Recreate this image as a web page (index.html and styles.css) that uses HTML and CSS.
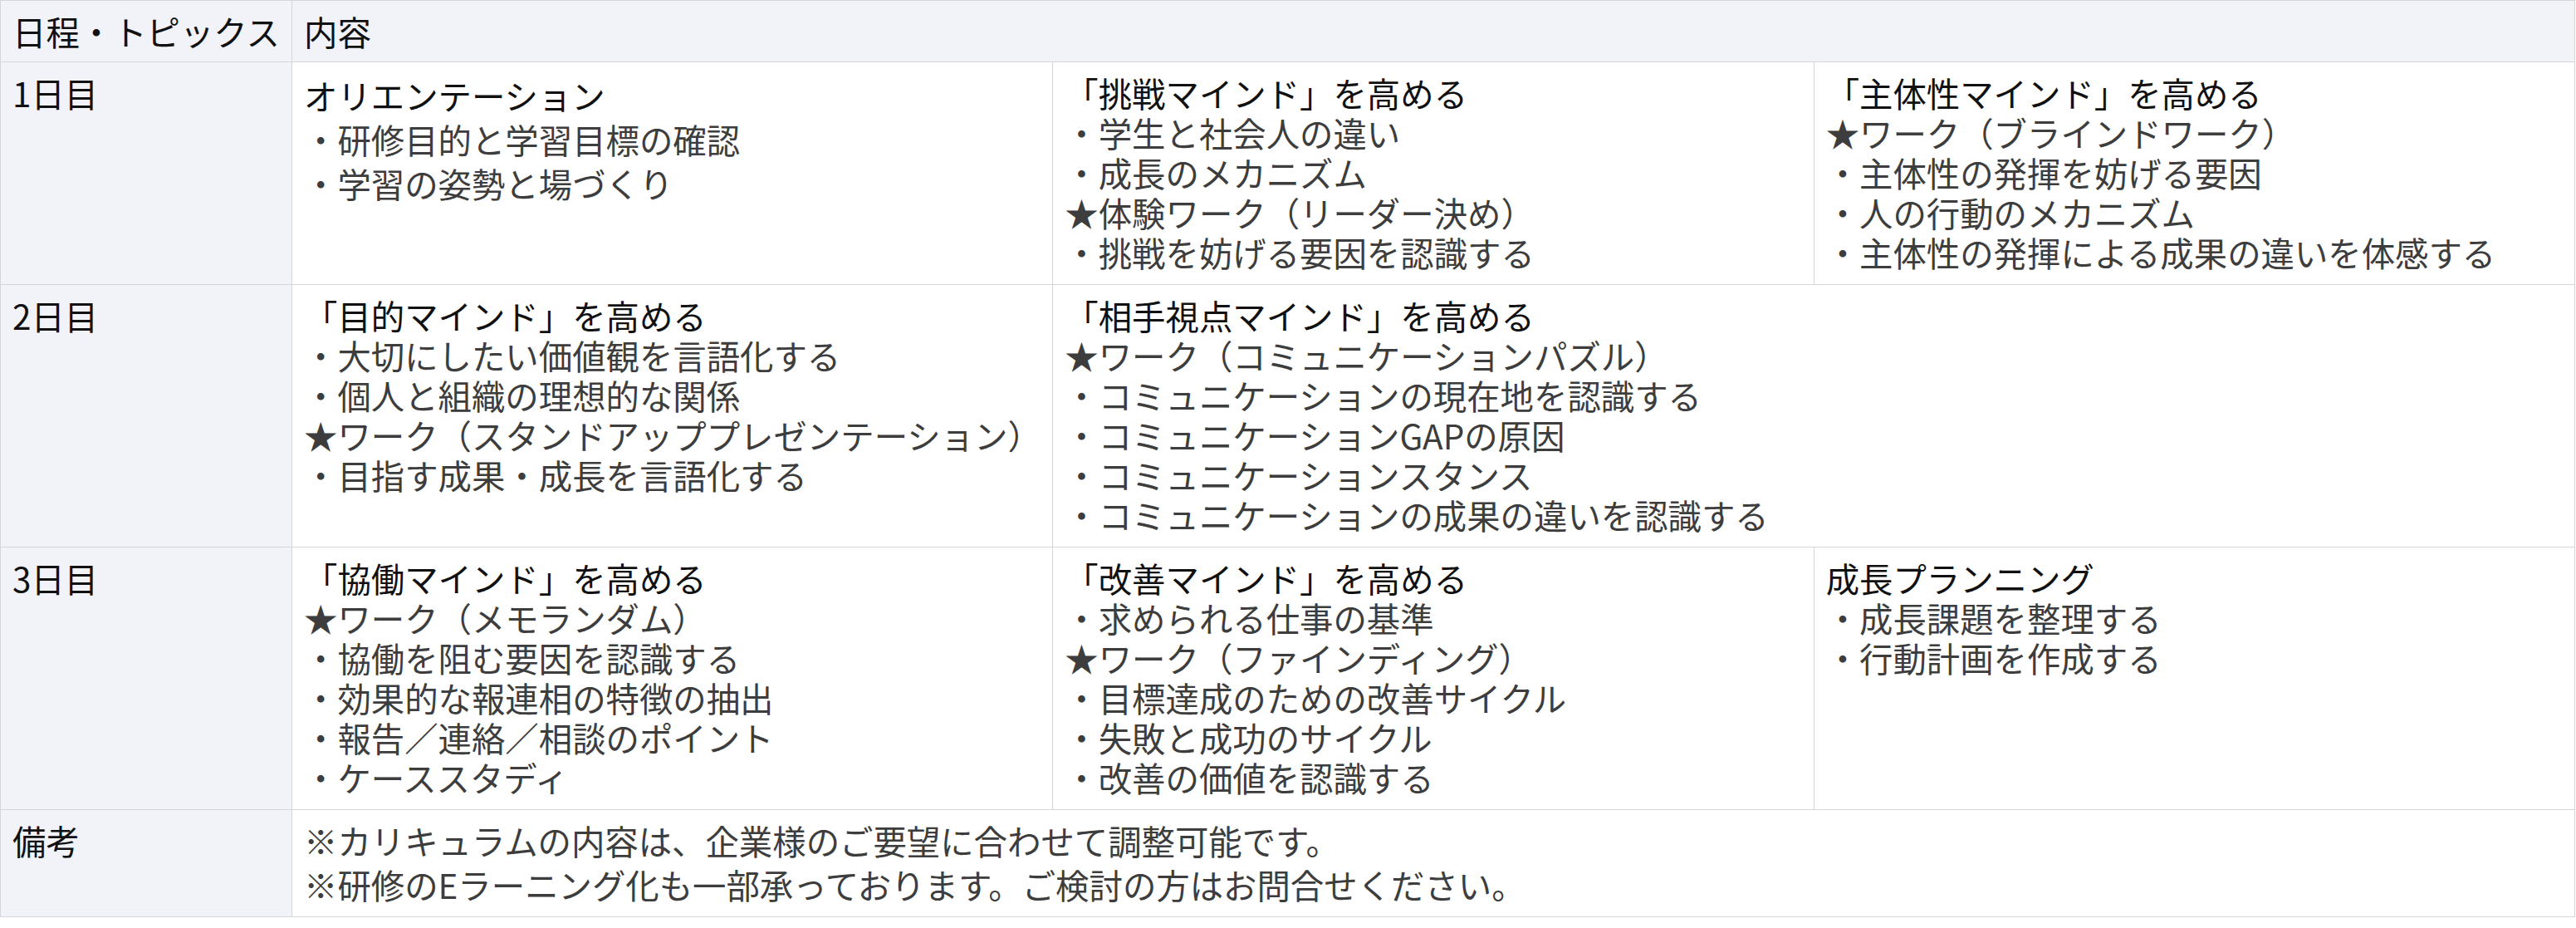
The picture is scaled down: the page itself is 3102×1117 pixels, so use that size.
FILE: index.html
```html
<!DOCTYPE html>
<html lang="ja">
<head>
<meta charset="utf-8">
<title>研修カリキュラム</title>
<link rel="stylesheet" href="styles.css">
</head>
<body>
<table class="curriculum">
  <colgroup>
    <col class="col-label">
    <col>
    <col>
    <col>
  </colgroup>
  <thead>
    <tr>
      <th class="head">日程・トピックス</th>
      <th class="head" colspan="3">内容</th>
    </tr>
  </thead>
  <tbody>
    <tr>
      <th class="label">1日目</th>
      <td class="cell loose">
        <div class="ttl">オリエンテーション</div>
        <div class="ln">・研修目的と学習目標の確認</div>
        <div class="ln">・学習の姿勢と場づくり</div>
      </td>
      <td class="cell">
        <div class="ttl">「挑戦マインド」を高める</div>
        <div class="ln">・学生と社会人の違い</div>
        <div class="ln">・成長のメカニズム</div>
        <div class="ln">★体験ワーク（リーダー決め）</div>
        <div class="ln">・挑戦を妨げる要因を認識する</div>
      </td>
      <td class="cell">
        <div class="ttl">「主体性マインド」を高める</div>
        <div class="ln">★ワーク（ブラインドワーク）</div>
        <div class="ln">・主体性の発揮を妨げる要因</div>
        <div class="ln">・人の行動のメカニズム</div>
        <div class="ln">・主体性の発揮による成果の違いを体感する</div>
      </td>
    </tr>
    <tr>
      <th class="label">2日目</th>
      <td class="cell">
        <div class="ttl">「目的マインド」を高める</div>
        <div class="ln">・大切にしたい価値観を言語化する</div>
        <div class="ln">・個人と組織の理想的な関係</div>
        <div class="ln">★ワーク（スタンドアッププレゼンテーション）</div>
        <div class="ln">・目指す成果・成長を言語化する</div>
      </td>
      <td class="cell" colspan="2">
        <div class="ttl">「相手視点マインド」を高める</div>
        <div class="ln">★ワーク（コミュニケーションパズル）</div>
        <div class="ln">・コミュニケーションの現在地を認識する</div>
        <div class="ln">・コミュニケーションGAPの原因</div>
        <div class="ln">・コミュニケーションスタンス</div>
        <div class="ln">・コミュニケーションの成果の違いを認識する</div>
      </td>
    </tr>
    <tr>
      <th class="label">3日目</th>
      <td class="cell">
        <div class="ttl">「協働マインド」を高める</div>
        <div class="ln">★ワーク（メモランダム）</div>
        <div class="ln">・協働を阻む要因を認識する</div>
        <div class="ln">・効果的な報連相の特徴の抽出</div>
        <div class="ln">・報告／連絡／相談のポイント</div>
        <div class="ln">・ケーススタディ</div>
      </td>
      <td class="cell">
        <div class="ttl">「改善マインド」を高める</div>
        <div class="ln">・求められる仕事の基準</div>
        <div class="ln">★ワーク（ファインディング）</div>
        <div class="ln">・目標達成のための改善サイクル</div>
        <div class="ln">・失敗と成功のサイクル</div>
        <div class="ln">・改善の価値を認識する</div>
      </td>
      <td class="cell">
        <div class="ttl">成長プランニング</div>
        <div class="ln">・成長課題を整理する</div>
        <div class="ln">・行動計画を作成する</div>
      </td>
    </tr>
    <tr class="note-row">
      <th class="label">備考</th>
      <td class="cell note" colspan="3">
        <div class="ln">※カリキュラムの内容は、企業様のご要望に合わせて調整可能です。</div>
        <div class="ln">※研修のEラーニング化も一部承っております。ご検討の方はお問合せください。</div>
      </td>
    </tr>
  </tbody>
</table>
</body>
</html>
```

FILE: styles.css
```css
html, body {
  margin: 0;
  padding: 0;
  background: #ffffff;
}

body {
  font-family: "Noto Sans CJK JP", "Noto Sans", sans-serif;
  font-size: 40.4px;
  color: #111111;
}

.curriculum {
  width: 3101px;
  border-collapse: collapse;
  table-layout: fixed;
}

.col-label {
  width: 351px;
}

.curriculum th,
.curriculum td {
  border: 1px solid #d6d6d8;
  text-align: left;
  vertical-align: top;
  font-weight: 400;
  line-height: 48px;
  white-space: nowrap;
}

.head {
  background: #f1f3f8;
  color: #111111;
  padding: 13px 14px 12px 14px;
}

.label {
  background: #f1f3f8;
  color: #111111;
  padding: 13px 14px 14px 14px;
}

.cell {
  background: #ffffff;
  padding: 13px 14px 14px 14px;
}

.ttl {
  color: #111111;
}

.ln {
  color: #3d3d3d;
}

.loose {
  line-height: 53px;
}

.loose .ttl,
.loose .ln {
  line-height: 53px;
}

.note-row .label {
  padding-top: 10px;
  padding-bottom: 12px;
  line-height: 53px;
}

.note {
  padding-top: 10px;
  padding-bottom: 12px;
}

.note .ln {
  line-height: 53px;
}
```
